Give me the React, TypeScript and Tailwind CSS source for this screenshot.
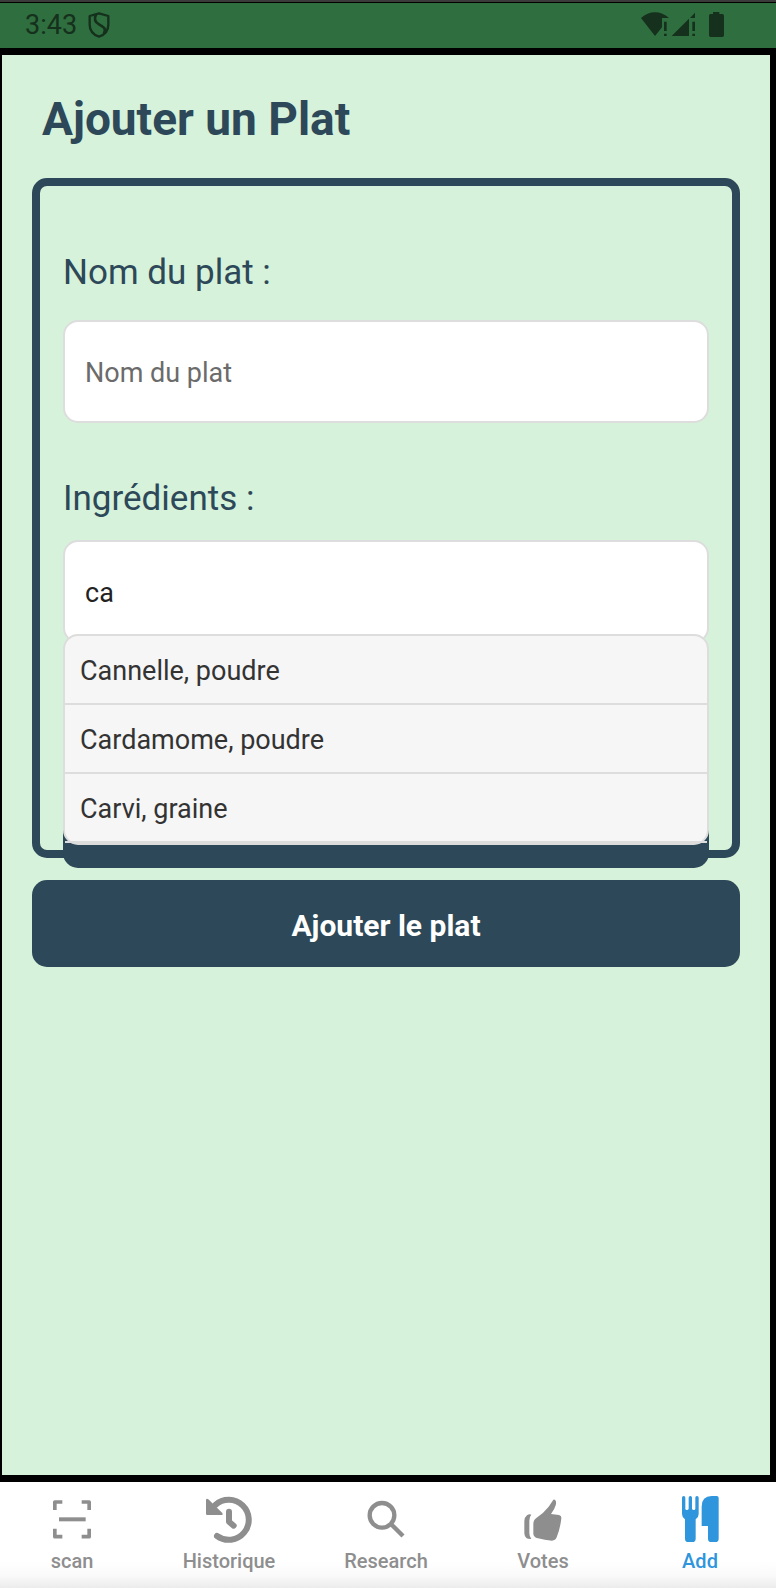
import { useState } from "react";
import type { ReactNode } from "react";

const suggestions = ["Cannelle, poudre", "Cardamome, poudre", "Carvi, graine"];

function ShieldIcon() {
  return (
    <svg viewBox="0 0 66 78" className="h-[26px] w-[22px]" fill="none" stroke="currentColor" strokeWidth="7" strokeLinejoin="round" aria-hidden="true">
      <path d="M33 4 L61 12 V38 C61 56 50 68 33 74 C16 68 5 56 5 38 V12 Z" />
      <path d="M24 7 C17 22 22 31 33 37 C48 45 55 50 48 64" strokeWidth="8" />
    </svg>
  );
}

function WifiAlertIcon() {
  return (
    <svg viewBox="0 0 87 75" className="h-[25px] w-[29px]" fill="currentColor" aria-hidden="true">
      <path d="M3 18 Q22 1 45 1 Q68 1 87 18 H66 V46 L45 72 Z" />
      <path d="M72 29 H80 V57 H72 Z M72 65 H80 V72 H72 Z" />
    </svg>
  );
}

function SignalAlertIcon() {
  return (
    <svg viewBox="0 0 75 75" className="h-[25px] w-[25px]" fill="currentColor" aria-hidden="true">
      <path d="M2 72 L54 20 V72 Z M57 18 L72 2 V18 Z" />
      <path d="M64 29 H72 V57 H64 Z M64 65 H72 V72 H64 Z" />
    </svg>
  );
}

function BatteryIcon() {
  return (
    <svg viewBox="0 0 45 75" className="h-[25px] w-[15px]" fill="currentColor" aria-hidden="true">
      <path d="M12 0 H31 V6 H40 Q45 6 45 11 V70 Q45 75 40 75 H5 Q0 75 0 70 V11 Q0 6 5 6 H12 Z" />
    </svg>
  );
}

function NavIcon({ children }: { children: ReactNode }) {
  return (
    <svg viewBox="0 0 138 138" className="size-[46px] overflow-visible" fill="currentColor" aria-hidden="true">
      {children}
    </svg>
  );
}

const tabs: { label: string; icon: ReactNode }[] = [
  {
    label: "scan",
    icon: (
      <g fill="none" stroke="currentColor" strokeWidth="11" strokeLinejoin="round">
        <path d="M17.500 42 V18 H40 M98 18 H120.500 V42 M120.500 98 V122 H98 M40 122 H17.500 V98" />
        <path d="M30 70 H110" strokeWidth="12" />
      </g>
    ),
  },
  {
    label: "Historique",
    icon: (
      <>
        <path d="M28 27 A60 60 0 1 1 33 120" fill="none" stroke="currentColor" strokeWidth="18" strokeLinecap="round" />
        <path d="M0 12 Q1 6 7 10 L49 51 Q52 57 46 57 H4 Q0 57 0 53 Z" />
        <path d="M69 47 V77 L83 89" fill="none" stroke="currentColor" strokeWidth="18" strokeLinecap="round" strokeLinejoin="round" />
      </>
    ),
  },
  {
    label: "Research",
    icon: (
      <g fill="none" stroke="currentColor" strokeWidth="13">
        <circle cx="57" cy="58" r="37" />
        <path d="M83 83 L120 120" />
      </g>
    ),
  },
  {
    label: "Votes",
    icon: (
      <>
        <path d="M40 84 Q40 71 50 65 Q72 50 86 32 L98 14 Q102 8 106 13 Q110 18 107 28 Q104 40 93 54 L117 57 Q125 59 124 67 Q121 96 110 124 Q106 134 96 134 Q74 132 54 127 Q40 123 40 113 Z" />
        <path d="M34 56 Q28 53 21 58 Q13 64 13 76 V110 Q13 124 24 128 L34 129 Q28 122 28 110 V74 Q28 62 34 56 Z" />
      </>
    ),
  },
  {
    label: "Add",
    icon: (
      <>
        <path d="M15 5 Q15 0 20 0 Q25 0 25 5 V38 Q25 42 29.500 42 Q34 42 35 38 V5 Q35 0 40 0 Q45 0 45 5 V38 Q46 42 50 42 Q55 42 55 38 V5 Q55 0 60 0 Q65 0 65 5 V54 Q65 64 56 70 V128 Q56 138 46 138 H34 Q24 138 24 128 V70 Q15 64 15 54 Z" />
        <path d="M74 90 V32 Q74 0 104 0 H119 Q125 0 125 6 V128 Q125 138 115 138 H103 Q93 138 93 128 V90 Z" />
      </>
    ),
  },
];

export default function App() {
  const [name, setName] = useState("");
  const [ingredient, setIngredient] = useState("ca");
  const [active, setActive] = useState("Add");

  return (
    <div className="flex min-h-screen flex-col bg-black font-['Roboto',sans-serif]">
      <div className="h-[3px] border-b border-black bg-[#3b3b3b]" />
      <header className="flex h-[45px] items-center bg-[#2f6e3e] pr-[52px] pb-0.5 pl-[25px] text-[#15301c]">
        <span className="text-[27px] leading-8">3:43</span>
        <span className="ml-[11px] flex-1">
          <ShieldIcon />
        </span>
        <span className="flex gap-0.5">
          <WifiAlertIcon />
          <SignalAlertIcon />
          <span className="pl-[11px]">
            <BatteryIcon />
          </span>
        </span>
      </header>

      <main className="mt-[7px] mr-1.5 mb-[7px] ml-0.5 flex-1 bg-[#d6f2da] px-[30px] pt-9 text-[#2d4858]">
        <h1 className="mb-[31px] pl-[10px] text-[46px] leading-[56px] font-bold">Ajouter un Plat</h1>

        <form onSubmit={(event) => event.preventDefault()}>
          <div className="flex flex-col rounded-[15px] border-8 border-[#2d4858] px-[23px] pt-[67px]">
            <label htmlFor="dish" className="text-[35px] leading-10">
              Nom du plat :
            </label>
            <input
              id="dish"
              value={name}
              onChange={(event) => setName(event.target.value)}
              placeholder="Nom du plat"
              className="mt-[27px] h-[103px] w-full rounded-[15px] border-2 border-[#dddddd] bg-white px-5 pt-0.5 text-[27px] text-[#222222] outline-none placeholder:text-[#6b6b6b]"
            />

            <label htmlFor="ingredient" className="mt-14 text-[35px] leading-10">
              Ingrédients :
            </label>
            <div className="relative mt-[21px]">
              <input
                id="ingredient"
                value={ingredient}
                onChange={(event) => setIngredient(event.target.value)}
                className="block h-[103px] w-full rounded-[15px] border-2 border-[#dddddd] bg-white px-5 pt-0.5 text-[27px] text-[#222222] outline-none"
              />
              <ul className="absolute inset-x-0 top-[94px] z-10 rounded-[15px] border-2 border-[#dddddd] bg-[#f6f6f6]">
                {suggestions.map((item) => (
                  <li key={item} className="border-b-2 border-[#dddddd]">
                    <button
                      type="button"
                      onClick={() => setIngredient(item)}
                      className="block w-full px-[15px] pt-[19px] pb-4 text-left text-[27px] leading-8 text-[#333333]"
                    >
                      {item}
                    </button>
                  </li>
                ))}
              </ul>
            </div>

            <button type="button" aria-label="Ajouter l'ingrédient" className="mt-[138px] mb-[-18px] h-[87px] rounded-[15px] bg-[#2d4858]" />
          </div>

          <button type="submit" className="mt-[22px] h-[87px] w-full rounded-[15px] bg-[#2d4858] pt-1 text-[30px] leading-9 font-bold text-white">
            Ajouter le plat
          </button>
        </form>
      </main>

      <nav className="flex h-[106px] justify-between bg-[linear-gradient(to_bottom,#ffffff_75%,#fafafa_88%,#ececec)] pt-[14px] pr-7 pl-6">
        {tabs.map(({ label, icon }) => (
          <button
            key={label}
            type="button"
            onClick={() => setActive(label)}
            className={`flex w-24 flex-col items-center gap-[7px] text-xl leading-6 font-medium ${active === label ? "text-[#2f95dc]" : "text-[#8e8e8f]"}`}
          >
            <NavIcon>{icon}</NavIcon>
            {label}
          </button>
        ))}
      </nav>
    </div>
  );
}
